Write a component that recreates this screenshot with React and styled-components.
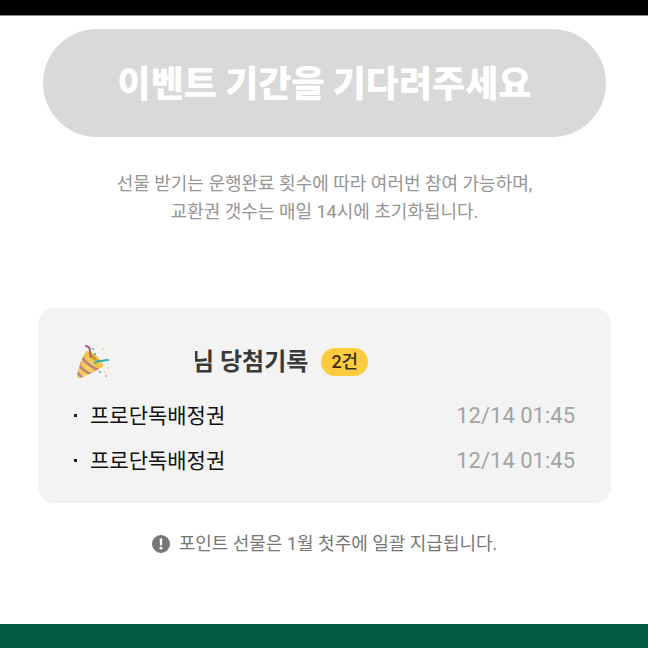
import React from 'react'
import styled, { createGlobalStyle } from 'styled-components'

const COLORS = {
  disabled: '#d9d9d9',
  card: '#f3f3f3',
  yellow: '#fccc3e',
  green: '#045a40',
}

const records = [
  { id: 1, name: '프로단독배정권', date: '12/14 01:45' },
  { id: 2, name: '프로단독배정권', date: '12/14 01:45' },
]

const PartyIcon = () => (
  <PartySvg viewBox="0 0 36 36" aria-hidden="true">
    <defs>
      <linearGradient id="cone" x1="0" y1="0" x2="1" y2="0.6">
        <stop offset="0" stopColor="#e2a93a" />
        <stop offset="0.55" stopColor="#f5d163" />
        <stop offset="1" stopColor="#e2a52e" />
      </linearGradient>
      <clipPath id="coneShape">
        <path d="M10 7 Q20 10 27 22 Q20 28 4 34 Q1 35 1 31 Q4 18 10 7Z" />
      </clipPath>
    </defs>
    <g clipPath="url(#coneShape)">
      <path d="M0 0H36V36H0Z" fill="url(#cone)" />
      <path
        d="M5 12Q12 22 24 27M2 20Q8 28 17 31M0 27Q4 32 9 35"
        fill="none"
        stroke="#b98778"
        strokeWidth="2.6"
      />
    </g>
    <path d="M10 7Q21 8 27 21Q27 25 23 23Q14 17 10 7Z" fill="#efc341" />
    <path d="M13 9Q20 12 23 19Q16 16 13 9Z" fill="#cf962c" />
    <path
      d="M10 2Q14 3 14 7Q14 10 15 13"
      fill="none"
      stroke="#bb5276"
      strokeWidth="2"
      strokeLinecap="round"
    />
    <path
      d="M19 19Q23 16 26 17Q29 16 32 16"
      fill="none"
      stroke="#32afb6"
      strokeWidth="2"
      strokeLinecap="round"
    />
    <g fill="#3bafc0">
      <circle cx="17" cy="5" r="1" />
      <circle cx="19" cy="10" r="1" />
      <circle cx="24" cy="28" r="1" />
    </g>
    <g fill="#f0d86b">
      <circle cx="27" cy="5" r="1" />
      <circle cx="32" cy="24" r="1" />
      <circle cx="29" cy="28" r="1" />
    </g>
    <g fill="#d897b5">
      <circle cx="30" cy="32" r="1" />
      <circle cx="5" cy="19" r="1" />
    </g>
  </PartySvg>
)

const NoticeIcon = () => (
  <NoticeSvg viewBox="0 0 18 18" aria-hidden="true">
    <circle cx="9" cy="9" r="9" fill="#777" />
    <path d="M7.6 3.5H10.4L10 10.5H8Z" fill="#fff" />
    <circle cx="9" cy="13.2" r="1.4" fill="#fff" />
  </NoticeSvg>
)

const App = () => {
  return (
    <>
      <GlobalStyle />
      <Page>
        <TopBar />
        <Main>
          <EventButton type="button" disabled>
            이벤트 기간을 기다려주세요
          </EventButton>
          <Description>
            선물 받기는 운행완료 횟수에 따라 여러번 참여 가능하며,
            <br />
            교환권 갯수는 매일 14시에 초기화됩니다.
          </Description>
          <Card>
            <CardHeader>
              <PartyIcon />
              <HiddenName />
              <CardTitle>님 당첨기록</CardTitle>
              <Badge>2건</Badge>
            </CardHeader>
            <RecordList>
              {records.map((record) => (
                <RecordItem key={record.id}>
                  <Dot />
                  <RecordName>{record.name}</RecordName>
                  <RecordDate>{record.date}</RecordDate>
                </RecordItem>
              ))}
            </RecordList>
          </Card>
          <Notice>
            <NoticeIcon />
            <span>포인트 선물은 1월 첫주에 일괄 지급됩니다.</span>
          </Notice>
        </Main>
        <BottomBar />
      </Page>
    </>
  )
}

const GlobalStyle = createGlobalStyle`
  * {
    box-sizing: border-box;
  }

  body {
    margin: 0;
    background-color: #fff;
    font-family: Roboto, 'Noto Sans CJK KR', sans-serif;
  }
`

const Page = styled.div`
  display: flex;
  flex-direction: column;
  min-height: 100vh;
`

const TopBar = styled.div`
  height: 16px;
  background-color: #000;
  border-bottom: 1px solid #8c8c8c;
`

const Main = styled.main`
  flex: 1;
  display: flex;
  flex-direction: column;
  padding: 13px 37px 64px 38px;
`

const EventButton = styled.button`
  margin: 0 5px;
  padding: 0 0 4px;
  height: 108px;
  border: 0;
  border-radius: 54px;
  background-color: ${COLORS.disabled};
  color: #fff;
  font-family: 'Noto Sans CJK KR', sans-serif;
  font-size: 36px;
  font-weight: 900;
`

const Description = styled.p`
  margin: 33px 0 82px;
  color: #959595;
  font-size: 18px;
  line-height: 28px;
  text-align: center;
`

const Card = styled.section`
  padding: 36px 36px 20px;
  border-radius: 16px;
  background-color: ${COLORS.card};
`

const CardHeader = styled.div`
  display: flex;
  align-items: center;
  height: 36px;
`

const PartySvg = styled.svg`
  width: 36px;
  height: 36px;
  margin-left: 2px;
`

const HiddenName = styled.span`
  z-index: 1;
  width: 83px;
  height: 32px;
  margin-right: -3px;
  background-color: ${COLORS.card};
`

const CardTitle = styled.h2`
  margin: 0;
  color: #3a3a3a;
  font-size: 24px;
  font-weight: 700;
  line-height: 36px;
`

const Badge = styled.span`
  margin-left: 13px;
  padding: 0 10px;
  border-radius: 14px;
  background-color: ${COLORS.yellow};
  color: #3b2f14;
  font-size: 18px;
  font-weight: 500;
  line-height: 28px;
`

const RecordList = styled.ul`
  margin: 13px 0 0;
  padding: 0;
  list-style: none;
`

const RecordItem = styled.li`
  display: flex;
  align-items: center;
  height: 45px;
  line-height: 32px;
`

const Dot = styled.span`
  width: 3px;
  height: 3px;
  margin-right: 13px;
  background-color: #222;
`

const RecordName = styled.span`
  flex: 1;
  color: #111;
  font-size: 21px;
`

const RecordDate = styled.time`
  color: #a3a3a3;
  font-size: 22px;
`

const Notice = styled.p`
  display: flex;
  align-items: center;
  justify-content: center;
  gap: 9px;
  margin: 27px 0 0;
  color: #777;
  font-size: 18px;
  line-height: 28px;
`

const NoticeSvg = styled.svg`
  width: 18px;
  height: 18px;
`

const BottomBar = styled.footer`
  height: 24px;
  background-color: ${COLORS.green};
`

export default App
